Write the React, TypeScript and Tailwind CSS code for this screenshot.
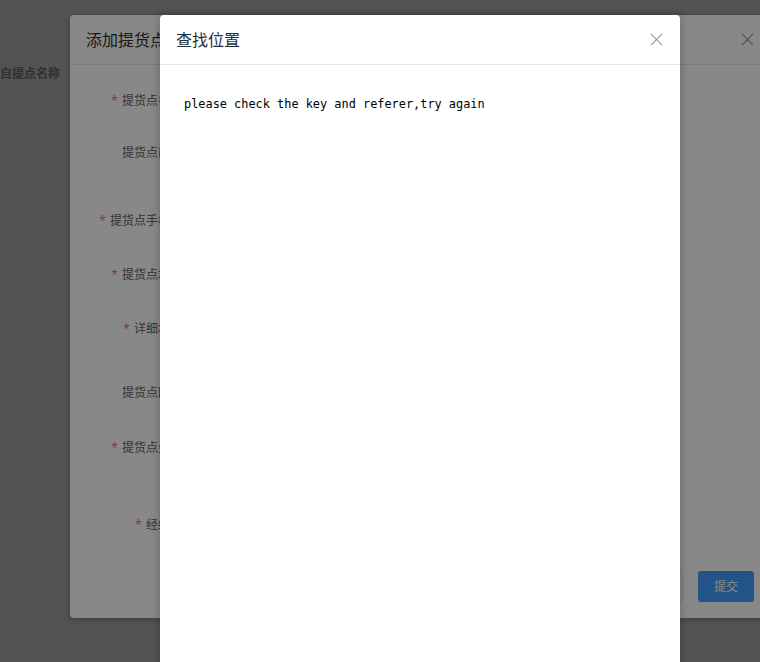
import React from "react";

const cjk = { fontFamily: '"Noto Sans", "Noto Sans CJK SC", sans-serif' };

function CloseIcon({ className }: { className?: string }) {
  return (
    <svg viewBox="0 0 14 14" className={className} fill="none" stroke="currentColor" strokeWidth="1.1">
      <line x1="1" y1="1" x2="13" y2="13" />
      <line x1="13" y1="1" x2="1" y2="13" />
    </svg>
  );
}

type Item = { label: string; required: boolean; h: string };

const items: Item[] = [
  { label: "提货点名称", required: true, h: "h-[52px]" },
  { label: "提货点简称", required: false, h: "h-[68px]" },
  { label: "提货点手机号", required: true, h: "h-[54px]" },
  { label: "提货点地区", required: true, h: "h-[54px]" },
  { label: "详细地址", required: true, h: "h-[64px]" },
  { label: "提货点图片", required: false, h: "h-[55px]" },
  { label: "提货点坐标", required: true, h: "h-[77px]" },
  { label: "经纬度", required: true, h: "h-[40px]" },
];

export default function App() {
  return (
    <div className="relative w-[760px] h-[662px] overflow-hidden bg-white" style={cjk}>
      {/* underlying list page */}
      <div className="pt-[50px]">
        <div className="h-[48px] border-b border-[#ebeef5] flex items-center text-[12px] font-bold text-[#909399]">
          自提点名称
        </div>
        <div className="h-[48px] border-b border-[#ebeef5]" />
      </div>

      {/* first modal mask */}
      <div className="absolute inset-0 bg-black/[0.39]" />

      {/* add pickup point dialog */}
      <div className="absolute left-[70px] top-[15px] w-[704px] h-[603px] bg-white rounded-[4px] shadow-[0_1px_6px_rgba(0,0,0,0.3)] flex flex-col">
        <div className="h-[50px] shrink-0 border-b border-[#e8e8e8] flex items-center justify-between pl-[16px] pr-[20px]">
          <span className="text-[16px] text-[#303133]">添加提货点</span>
          <CloseIcon className="w-[13px] h-[13px] text-[#909399]" />
        </div>
        <div className="flex-1 pt-[20px]">
          {items.map((it) => (
            <div key={it.label} className={`flex ${it.h}`}>
              <div className="w-[112px] shrink-0 h-[32px] flex items-center justify-end text-[12px] text-[#606266]">
                {it.required && <span className="text-[#f56c6c] mr-[4px]">*</span>}
                {it.label}
              </div>
            </div>
          ))}
        </div>
        <div className="flex justify-end items-center gap-[15px] pr-[20px] pb-[16px]">
          <button className="w-[56px] h-[31px] rounded-[3px] border border-[#dcdfe6] bg-white text-[12px] text-[#606266]">
            取消
          </button>
          <button className="w-[56px] h-[31px] rounded-[3px] bg-[#409eff] text-[12px] text-white">
            提交
          </button>
        </div>
      </div>

      {/* second modal mask */}
      <div className="absolute inset-0 bg-black/[0.467]" />

      {/* find location dialog */}
      <div className="absolute left-[160px] top-[15px] w-[520px] h-[680px] bg-white rounded-t-[4px] shadow-[0_0_10px_rgba(0,0,0,0.25)] flex flex-col">
        <div className="h-[50px] shrink-0 border-b border-[#e8e8e8] flex items-center justify-between pl-[16px] pr-[17px]">
          <span className="text-[16px] text-[#1f2d3d]">查找位置</span>
          <CloseIcon className="w-[13px] h-[13px] text-[#909399]" />
        </div>
        <div className="px-[24px] pt-[31px]">
          <div
            className="text-[11.9px] leading-[16px] text-black"
            style={{ fontFamily: '"DejaVu Sans Mono", monospace' }}
          >
            please check the key and referer,try again
          </div>
        </div>
      </div>
    </div>
  );
}
